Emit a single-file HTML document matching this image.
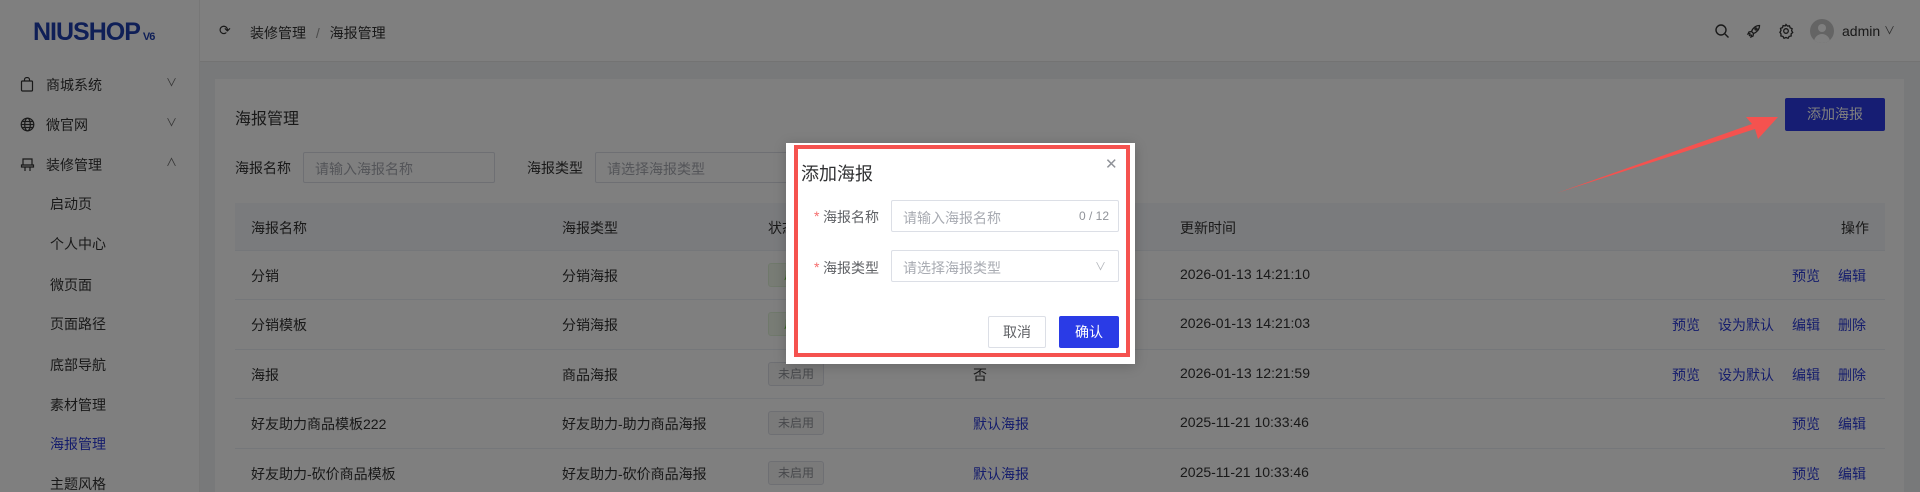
<!DOCTYPE html>
<html><head><meta charset="utf-8"><style>
*{margin:0;padding:0;box-sizing:border-box}
html{width:1920px;height:492px;overflow:hidden}
body{width:1920px;height:492px;overflow:hidden;position:relative;background:#f0f2f5;font-family:"Liberation Sans","Noto Sans CJK SC",sans-serif;font-size:14px;color:#333}
.a{position:absolute;white-space:nowrap}
.side{left:0;top:0;width:200px;height:492px;background:#fff;border-right:1px solid #eee}
.head{left:200px;top:0;width:1720px;height:62px;background:#fff;border-bottom:1px solid #e6e6e6}
.card{left:215px;top:79px;width:1689px;height:413px;background:#fff}
.th{left:235px;top:203px;width:1650px;height:47px;background:#f5f7fa}
.line{height:1px;background:#ebeef5;left:235px;width:1650px}
.tag{width:56px;height:24px;border:1px solid #dcdfe6;background:#f4f4f5;color:#909399;font-size:12px;border-radius:3px;text-align:center;line-height:22px}
.tag.g{background:#f0f9eb;border-color:#e1f3d8;color:#67c23a}
.lk{color:#2a3ad8}
.inp{border:1px solid #dcdfe6;background:#fff;border-radius:2px}
.ph{color:#a8abb2}
.ov{left:0;top:0;width:1920px;height:492px;background:rgba(0,0,0,.5)}
</style></head><body>
<div class="a side"></div>
<div class="a" style="left:33px;top:18px;font-size:25px;font-weight:bold;color:#1f3fae;letter-spacing:-1px;font-family:'Liberation Sans Narrow','Liberation Sans',sans-serif">NIUSHOP<span style="font-size:11px;margin-left:3px">V6</span></div>
<svg class="a" style="left:20px;top:77px" width="14" height="15" viewBox="0 0 14 15" fill="none" stroke="#333" stroke-width="1.2"><rect x="1.5" y="4" width="11" height="10" rx="1"/><path d="M4.5 4V2.5a2.5 2 0 0 1 5 0V4"/></svg>
<div class="a" style="left:46px;top:75px">商城系统</div>
<div class="a" style="left:166px;top:74px;color:#666;font-size:11px">∨</div>
<svg class="a" style="left:20px;top:117px" width="15" height="15" viewBox="0 0 15 15" fill="none" stroke="#333" stroke-width="1.2"><circle cx="7.5" cy="7.5" r="6.3"/><ellipse cx="7.5" cy="7.5" rx="2.8" ry="6.3"/><path d="M1.2 7.5h12.6M2 4.5h11M2 10.5h11"/></svg>
<div class="a" style="left:46px;top:115px">微官网</div>
<div class="a" style="left:166px;top:114px;color:#666;font-size:11px">∨</div>
<svg class="a" style="left:20px;top:157px" width="15" height="15" viewBox="0 0 15 15" fill="none" stroke="#333" stroke-width="1.2"><path d="M3 2h9v6H3zM1.5 8h12v2H1.5zM5 10v4M10 10v4"/></svg>
<div class="a" style="left:46px;top:155px">装修管理</div>
<div class="a" style="left:166px;top:154px;color:#666;font-size:11px">∧</div>
<div class="a" style="left:50px;top:194px">启动页</div>
<div class="a" style="left:50px;top:234px">个人中心</div>
<div class="a" style="left:50px;top:275px">微页面</div>
<div class="a" style="left:50px;top:314px">页面路径</div>
<div class="a" style="left:50px;top:355px">底部导航</div>
<div class="a" style="left:50px;top:395px">素材管理</div>
<div class="a" style="left:50px;top:434px;color:#2a3ad8">海报管理</div>
<div class="a" style="left:50px;top:474px">主题风格</div>
<div class="a head"></div>
<div class="a" style="left:219px;top:22px;font-size:14px;color:#333">⟳</div>
<div class="a" style="left:250px;top:23px;color:#333">装修管理 <span style="color:#999;margin:0 6px">/</span> 海报管理</div>
<svg class="a" style="left:1714px;top:23px" width="16" height="16" viewBox="0 0 16 16" fill="none" stroke="#333" stroke-width="1.4"><circle cx="7" cy="7" r="5"/><path d="M11 11l3.5 3.5"/></svg>
<svg class="a" style="left:1746px;top:23px" width="16" height="16" viewBox="0 0 16 16" fill="none" stroke="#333" stroke-width="1.3"><path d="M13.5 2.5c-4 0-7 3-8 6l2 2c3-1 6-4 6-8zM5.5 8.5l-2.5.5-1 2 2.5-.5M7.5 10.5l-.5 2.5-2 1 .5-2.5M3 13l1.5-1.5"/><circle cx="10" cy="6" r="1"/></svg>
<svg class="a" style="left:1778px;top:23px" width="16" height="16" viewBox="0 0 16 16" fill="none" stroke="#333" stroke-width="1.3"><circle cx="8" cy="8" r="2.3"/><path d="M8 1.5l1.4 1.6 2.1-.3.6 2 2 .8-.5 2.1 1.1 1.8-1.6 1.4.1 2.1-2.1.4-1 1.9-2.1-.8-2 .8-1-1.9-2.1-.4.1-2.1L1.9 9.3 3 7.5 2.5 5.4l2-.8.6-2 2.1.3z"/></svg>
<div class="a" style="left:1810px;top:19px;width:24px;height:24px;border-radius:50%;background:#c8c8c8;overflow:hidden"><div style="position:absolute;left:8px;top:5px;width:8px;height:8px;border-radius:50%;background:#fff"></div><div style="position:absolute;left:4px;top:15px;width:16px;height:12px;border-radius:8px 8px 0 0;background:#fff"></div></div>
<div class="a" style="left:1842px;top:23px;color:#333;font-size:14px">admin</div>
<div class="a" style="left:1884px;top:22px;color:#555;font-size:11px">∨</div>
<div class="a card"></div>
<div class="a" style="left:235px;top:105px;font-size:16px">海报管理</div>
<div class="a" style="left:1785px;top:98px;width:100px;height:33px;background:#2c3be6;color:#fff;text-align:center;line-height:33px;border-radius:2px">添加海报</div>
<div class="a" style="left:235px;top:158px">海报名称</div>
<div class="a inp" style="left:303px;top:152px;width:192px;height:31px"><span class="ph" style="position:absolute;left:11px;top:6px">请输入海报名称</span></div>
<div class="a" style="left:527px;top:158px">海报类型</div>
<div class="a inp" style="left:595px;top:152px;width:200px;height:31px"><span class="ph" style="position:absolute;left:11px;top:6px">请选择海报类型</span></div>
<div class="a th"></div>
<div class="a" style="left:251px;top:218px">海报名称</div>
<div class="a" style="left:562px;top:218px">海报类型</div>
<div class="a" style="left:768px;top:218px">状态</div>
<div class="a" style="left:973px;top:218px">默认</div>
<div class="a" style="left:1180px;top:218px">更新时间</div>
<div class="a" style="left:1841px;top:218px">操作</div>
<div class="a line" style="top:250px"></div>
<div class="a line" style="top:299px"></div>
<div class="a line" style="top:349px"></div>
<div class="a line" style="top:398px"></div>
<div class="a line" style="top:448px"></div>
<div class="a" style="left:251px;top:266px">分销</div><div class="a" style="left:562px;top:266px">分销海报</div><div class="a tag g" style="left:768px;top:263px">启用</div><div class="a" style="left:1180px;top:266px">2026-01-13 14:21:10</div><div class="a lk" style="left:1792px;top:266px">预览</div><div class="a lk" style="left:1838px;top:266px">编辑</div>
<div class="a" style="left:251px;top:315px">分销模板</div><div class="a" style="left:562px;top:315px">分销海报</div><div class="a tag g" style="left:768px;top:312px">启用</div><div class="a" style="left:1180px;top:315px">2026-01-13 14:21:03</div><div class="a lk" style="left:1672px;top:315px">预览</div><div class="a lk" style="left:1718px;top:315px">设为默认</div><div class="a lk" style="left:1792px;top:315px">编辑</div><div class="a lk" style="left:1838px;top:315px">删除</div>
<div class="a" style="left:251px;top:365px">海报</div><div class="a" style="left:562px;top:365px">商品海报</div><div class="a tag" style="left:768px;top:362px">未启用</div><div class="a" style="left:973px;top:365px">否</div><div class="a" style="left:1180px;top:365px">2026-01-13 12:21:59</div><div class="a lk" style="left:1672px;top:365px">预览</div><div class="a lk" style="left:1718px;top:365px">设为默认</div><div class="a lk" style="left:1792px;top:365px">编辑</div><div class="a lk" style="left:1838px;top:365px">删除</div>
<div class="a" style="left:251px;top:414px">好友助力商品模板222</div><div class="a" style="left:562px;top:414px">好友助力-助力商品海报</div><div class="a tag" style="left:768px;top:411px">未启用</div><div class="a lk" style="left:973px;top:414px">默认海报</div><div class="a" style="left:1180px;top:414px">2025-11-21 10:33:46</div><div class="a lk" style="left:1792px;top:414px">预览</div><div class="a lk" style="left:1838px;top:414px">编辑</div>
<div class="a" style="left:251px;top:464px">好友助力-砍价商品模板</div><div class="a" style="left:562px;top:464px">好友助力-砍价商品海报</div><div class="a tag" style="left:768px;top:461px">未启用</div><div class="a lk" style="left:973px;top:464px">默认海报</div><div class="a" style="left:1180px;top:464px">2025-11-21 10:33:46</div><div class="a lk" style="left:1792px;top:464px">预览</div><div class="a lk" style="left:1838px;top:464px">编辑</div>
<div class="a ov"></div>
<div class="a" style="left:786px;top:143px;width:349px;height:221px;background:#fff;box-shadow:0 2px 12px rgba(0,0,0,.2)"></div>
<div class="a" style="left:794px;top:145px;width:336px;height:212px;border:4px solid #f5524f"></div>
<div class="a" style="left:801px;top:160px;font-size:18px;color:#303133">添加海报</div>
<div class="a" style="left:1105px;top:155px;color:#909399;font-size:15px">✕</div>
<div class="a" style="left:814px;top:208px;color:#f56c6c">*</div>
<div class="a" style="left:823px;top:207px;color:#606266">海报名称</div>
<div class="a inp" style="left:891px;top:200px;width:228px;height:32px"><span class="ph" style="position:absolute;left:11px;top:7px">请输入海报名称</span><span style="position:absolute;right:9px;top:8px;font-size:12px;color:#909399">0 / 12</span></div>
<div class="a" style="left:814px;top:259px;color:#f56c6c">*</div>
<div class="a" style="left:823px;top:258px;color:#606266">海报类型</div>
<div class="a inp" style="left:891px;top:250px;width:228px;height:32px"><span class="ph" style="position:absolute;left:11px;top:7px">请选择海报类型</span><span style="position:absolute;right:12px;top:7px;font-size:11px;color:#b0b3b8">∨</span></div>
<div class="a" style="left:988px;top:316px;width:58px;height:32px;border:1px solid #dcdfe6;border-radius:2px;text-align:center;line-height:30px;color:#606266">取消</div>
<div class="a" style="left:1059px;top:316px;width:60px;height:32px;background:#2a3be6;border-radius:2px;text-align:center;line-height:32px;color:#fff">确认</div>
<svg class="a" style="left:0;top:0" width="1920" height="492"><polygon points="1557,193 1752,124 1746,117 1778,117 1758,139 1755,129" fill="#f5524f"/></svg>
</body></html>
